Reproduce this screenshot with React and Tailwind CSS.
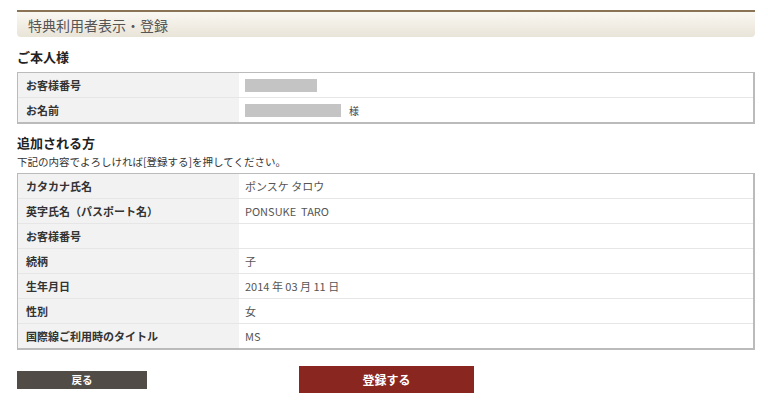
const font = { fontFamily: '"Noto Sans CJK JP", "Noto Sans", sans-serif' }

const selfRows = [
  { label: 'お客様番号', bar: 'w-[72px]' },
  { label: 'お名前', bar: 'w-[96px]', suffix: '様' },
]

const addedRows = [
  ['カタカナ氏名', 'ポンスケ タロウ'],
  ['英字氏名（パスポート名）', 'PONSUKE\u00a0\u00a0TARO'],
  ['お客様番号', ''],
  ['続柄', '子'],
  ['生年月日', '2014 年 03 月 11 日'],
  ['性別', '女'],
  ['国際線ご利用時のタイトル', 'MS'],
]

function Row({ label, children, last }) {
  return (
    <div className={`flex ${last ? 'h-[24px]' : 'h-[25px] border-b border-[#e6e6e6]'}`}>
      <div className="w-[221px] shrink-0 bg-[#f2f2f2] pl-[8px] flex items-center text-[11px] font-bold text-[#333]">
        {label}
      </div>
      <div className="flex-1 bg-white pl-[6px] flex items-center text-[11px] text-[#555]">
        {children}
      </div>
    </div>
  )
}

export default function App() {
  return (
    <div className="w-[768px] h-[404px] bg-white overflow-hidden" style={font}>
      <div className="pl-[17px] pr-[13px] pt-[10px]">
        {/* Title bar */}
        <div className="h-[27px] border-t-2 border-[#8b7355] rounded-b-[4px] bg-gradient-to-b from-[#faf8f3] to-[#e9e4d8] flex items-center pl-[11px]">
          <h1 className="text-[14px] text-[#555] leading-none">特典利用者表示・登録</h1>
        </div>

        {/* Self */}
        <h2 className="mt-[12px] text-[13px] font-bold text-[#222] leading-[16px]">ご本人様</h2>
        <div className="mt-[7px] border border-[#bbb] border-b-2 border-r-2">
          {selfRows.map((r, i) => (
            <Row key={r.label} label={r.label} last={i === selfRows.length - 1}>
              <div className="flex items-center gap-[8px]">
                <div className={`${r.bar} h-[13px] bg-[#c4c4c4]`} />
                {r.suffix && <span className="text-[10px] text-[#444]">{r.suffix}</span>}
              </div>
            </Row>
          ))}
        </div>

        {/* Added person */}
        <h2 className="mt-[11px] text-[13px] font-bold text-[#222] leading-[16px]">追加される方</h2>
        <p className="mt-[4px] text-[10.5px] text-[#333] leading-[14px]">
          下記の内容でよろしければ[登録する]を押してください。
        </p>
        <div className="mt-[4px] border border-[#bbb] border-b-2 border-r-2">
          {addedRows.map(([label, value], i) => (
            <Row key={label} label={label} last={i === addedRows.length - 1}>
              {value}
            </Row>
          ))}
        </div>

        {/* Buttons */}
        <div className="mt-[16px] flex items-center">
          <button className="w-[130px] h-[18px] bg-[#524c47] text-white text-[10.5px] font-bold flex items-center justify-center">
            戻る
          </button>
          <button className="ml-[152px] w-[175px] h-[27px] bg-[#8a2620] text-white text-[12px] font-bold flex items-center justify-center">
            登録する
          </button>
        </div>
      </div>
    </div>
  )
}
